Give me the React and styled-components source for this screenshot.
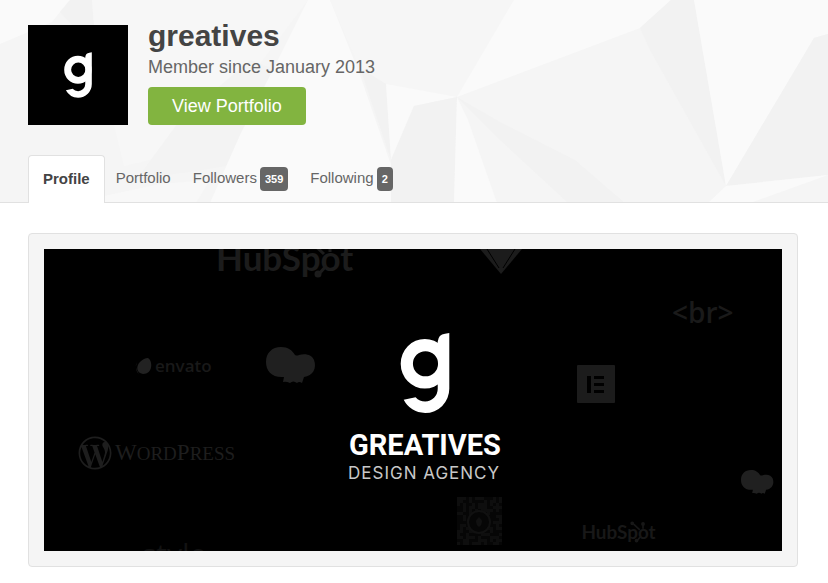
import React from "react";
import styled, {createGlobalStyle} from "styled-components";
import {FaWordpressSimple} from "react-icons/fa";

const tabs = [
  {label: "Profile", active: true},
  {label: "Portfolio"},
  {label: "Followers", count: 359},
  {label: "Following", count: 2},
];

const facets = [
  {points: "0,0 70,0 52,22 0,44", fill: "#fafafa"},
  {points: "70,0 92,0 96,50 60,12", fill: "#f2f2f2"},
  {points: "92,0 308,0 240,90 150,160 124,166 96,50", fill: "#f7f7f7"},
  {points: "250,60 290,75 228,166 136,180 180,120", fill: "#f3f3f3"},
  {points: "308,0 330,0 360,75 391,165 391,203 210,203 240,135", fill: "#fafafa"},
  {points: "330,0 514,0 457,97 386,84 360,68", fill: "#f6f6f6"},
  {points: "360,68 386,84 391,160", fill: "#f2f2f2"},
  {points: "386,84 457,97 414,106 391,160", fill: "#fafafa"},
  {points: "414,106 457,97 454,203 391,203 391,160", fill: "#f2f2f2"},
  {points: "514,0 671,0 640,28 457,97", fill: "#fafafa"},
  {points: "671,0 694,0 726,186 650,50 640,28", fill: "#f2f2f2"},
  {points: "694,0 828,0 828,34 814,38 726,186", fill: "#fafafa"},
  {points: "828,34 814,38 726,186 828,175", fill: "#f2f2f2"},
  {points: "726,186 828,175 750,203 708,203", fill: "#fafafa"},
  {points: "457,97 468,120 497,203 454,203", fill: "#fafafa"},
  {points: "457,97 500,122 575,160 625,203 568,203 500,140", fill: "#f2f2f2"},
  {points: "104,196 160,184 210,180 196,203 104,203", fill: "#f8f8f8"},
];

// speckle for the faded code tile in the banner
const dots = [];
for (let y = 0; y < 16; y++) {
  for (let x = 0; x < 15; x++) {
    const n = Math.sin(x * 127 + y * 311) * 4375;
    if (n - Math.floor(n) < 0.5) dots.push([x * 3, y * 3]);
  }
}

const GMark = ({fill = "#fff", ...props}) => (
  <svg viewBox="210 38 149 242" fill={fill} aria-hidden="true" {...props}>
    <path
      fillRule="evenodd"
      d="M284 56a73 75 0 1 0 0 150a73 75 0 1 0 0-150ZM286 93a38 38 0 1 1 0 76a38 38 0 1 1 0-76Z"
    />
    <path d="M323 76V64Q325 42 345 40L358 38V207A73 73 0 0 1 285 280Q240 278 220 240L256 232Q268 245 285 245A38 38 0 0 0 323 207V180L324 131Z" />
  </svg>
);

const HubSpot = ({x, y, scale = 1, fill}) => (
  <g transform={`translate(${x} ${y}) scale(${scale})`} fill={fill}>
    <Wordmark x="-1" y="0" fontSize="35" fontWeight="700" fontFamily="Lato">
      HubSpot
    </Wordmark>
    <g stroke={fill} strokeWidth="3">
      <path d="M94-29L107-17M113-27V-19M109-5L102 3" />
      <circle cx="93" cy="-29" r="2" />
      <circle cx="113" cy="-28" r="2" />
      <circle cx="101" cy="3" r="2" />
    </g>
  </g>
);

const Mascot = ({x, y, scale = 1}) => (
  <g transform={`translate(${x} ${y}) scale(${scale})`} fill="#202020">
    <path d="M15 0C22 0 26 3 29 8Q31 9 33 8C40 6 46 8 48 13C51 21 47 29 38 30L36 36Q33 34 31 36Q27 33 24 36Q20 34 17 35L18 30C6 31 0 24 0 15C0 6 6 0 15 0Z" />
  </g>
);

const Banner = () => (
  <BannerArt viewBox="0 0 738 302" role="img" aria-label="Greatives Design Agency">
    <rect width="738" height="302" fill="#000" />

    <HubSpot x={173} y={22} fill="#1c1c1c" />
    <path d="M436 0H478L457 25Z" fill="#1c1c1c" />
    <path d="M443 0L455 19M471 0L459 19" stroke="#000" strokeWidth="1" />
    <Wordmark x="628" y="74" fontSize="28" fontWeight="600" fontFamily="Open Sans" fill="#1a1a1a">
      &lt;br&gt;
    </Wordmark>

    <path
      d="M104 109C109 112 109 125 99 125C92 124 92 117 96 113Q100 109 104 109ZM93 113Q90 121 95 125Q90 118 93 113Z"
      fill="#222"
    />
    <Wordmark x="111" y="123" fontSize="17" fontWeight="600" fontFamily="Open Sans" fill="#191919">
      envato
    </Wordmark>
    <Mascot x={222} y={98} />

    <rect x="533" y="116" width="38" height="38" rx="1" fill="#1c1c1c" />
    <path d="M543 127h4v17h-4zM550 127h10v3h-10zM550 134h10v3h-10zM550 141h10v3h-10z" fill="#000" />

    <FaWordpressSimple x="34" y="187" size="34" color="#1e1e1e" />
    <Wordmark x="71" y="211" fontSize="23" fontFamily="Liberation Serif" fill="#1e1e1e">
      W<tspan fontSize="19">ORD</tspan>P<tspan fontSize="19">RESS</tspan>
    </Wordmark>

    <GMark x="356" y="84" width="50" height="80" />
    <Wordmark x="305" y="206" fontSize="29" fontWeight="700" fill="#fff">
      GREATIVES
    </Wordmark>
    <Wordmark x="304" y="230" fontSize="17" letterSpacing="1" fontFamily="Inter" fill="#c8c8c8">
      DESIGN AGENCY
    </Wordmark>

    <Mascot x={697} y={221} scale={0.66} />
    <g transform="translate(413 248)" fill="#0e0e0e">
      <rect width="45" height="48" fill="#060606" />
      {dots.map(([x, y]) => (
        <rect key={`${x}-${y}`} x={x} y={y} width="3" height="3" />
      ))}
      <circle cx="22" cy="25" r="11" fill="#060606" stroke="#111" strokeWidth="2" />
      <path d="M22 20q6 5 0 10q-6-5 0-10" fill="#111" />
    </g>
    <HubSpot x={538} y={290} scale={0.54} fill="#181818" />
    <Wordmark x="98" y="316" fontSize="30" fontFamily="Open Sans" fill="#121212">
      style
    </Wordmark>
  </BannerArt>
);

const App = () => {
  return (
    <>
      <GlobalStyle />
      <Header>
        <Backdrop viewBox="0 0 828 203" preserveAspectRatio="xMidYMin slice" aria-hidden="true">
          {facets.map((facet) => (
            <polygon key={facet.points} points={facet.points} fill={facet.fill} />
          ))}
        </Backdrop>
        <User>
          <Avatar>
            <GMark width="28" height="46" />
          </Avatar>
          <Info>
            <Name>greatives</Name>
            <Since>Member since January 2013</Since>
            <PortfolioLink href="#portfolio">View Portfolio</PortfolioLink>
          </Info>
        </User>
        <Tabs>
          {tabs.map((tab) => (
            <Tab
              key={tab.label}
              href={`#${tab.label.toLowerCase()}`}
              $active={tab.active}
              aria-current={tab.active ? "page" : undefined}>
              {tab.label}
              {tab.count && <Count>{tab.count}</Count>}
            </Tab>
          ))}
        </Tabs>
      </Header>
      <Main>
        <Panel>
          <Banner />
        </Panel>
      </Main>
    </>
  );
};

export default App;

const GlobalStyle = createGlobalStyle`
  * {
    box-sizing: border-box;
  }
  body {
    margin: 0;
    background: #fff;
    color: #666;
    font-family: "Liberation Sans", Arial, sans-serif;
  }
`;
const Header = styled.header`
  position: relative;
  padding: 25px 30px 0 28px;
  background: #f5f5f5;
  border-bottom: 1px solid #e1e1e1;
`;
const Backdrop = styled.svg`
  position: absolute;
  inset: 0;
  width: 100%;
  height: 100%;
`;
const User = styled.div`
  position: relative;
  display: flex;
  gap: 20px;
`;
const Avatar = styled.div`
  display: flex;
  align-items: center;
  justify-content: center;
  width: 100px;
  height: 100px;
  background: #000;
`;
const Info = styled.div`
  display: flex;
  flex-direction: column;
  align-items: flex-start;
`;
const Name = styled.h1`
  margin: 0;
  color: #444;
  font-size: 30px;
  line-height: 22px;
`;
const Since = styled.p`
  margin: 8px 0;
  font-size: 18px;
  line-height: 24px;
`;
const PortfolioLink = styled.a`
  padding: 0 24px;
  border-radius: 4px;
  background: #82b440;
  color: #fff;
  font-size: 18px;
  line-height: 38px;
  text-decoration: none;
`;
const Tabs = styled.nav`
  position: relative;
  display: flex;
  margin-top: 30px;
  margin-bottom: -1px;
`;
const Tab = styled.a`
  display: flex;
  align-items: center;
  height: 48px;
  padding: ${(props) => (props.$active ? "0 14px 2px" : "0 11px 4px")};
  border: ${(props) => (props.$active ? "1px solid #e1e1e1" : "0")};
  border-bottom: 0;
  border-radius: 4px 4px 0 0;
  background: ${(props) => (props.$active ? "#fff" : "transparent")};
  color: ${(props) => (props.$active ? "#444" : "#666")};
  font-size: 15px;
  font-weight: ${(props) => (props.$active ? "bold" : "normal")};
  text-decoration: none;
`;
const Count = styled.span`
  margin-top: 4px;
  margin-left: 3px;
  padding: 0 5px;
  border-radius: 4px;
  background: #666;
  color: #fff;
  font-size: 11px;
  font-weight: bold;
  line-height: 24px;
`;
const Main = styled.main`
  padding: 30px 30px 16px 28px;
`;
const Panel = styled.section`
  padding: 15px;
  border: 1px solid #e1e1e1;
  border-radius: 4px;
  background: #f5f5f5;
`;
const BannerArt = styled.svg`
  display: block;
  width: 100%;
  height: auto;
`;
const Wordmark = styled.text`
  font-family: ${(props) => props.fontFamily || "Roboto"}, sans-serif;
`;
